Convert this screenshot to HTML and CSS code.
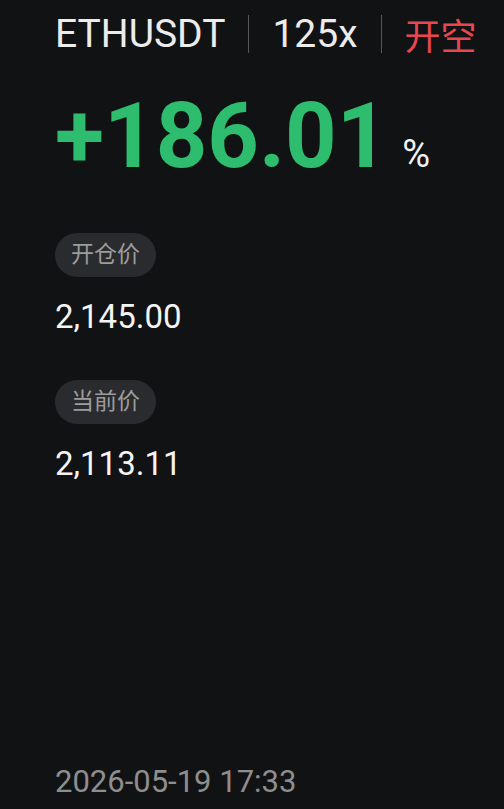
FILE: index.html
```html
<!DOCTYPE html>
<html>
<head>
    <title>ETHUSDT</title>
    <meta name="viewport" content="width=device-width, initial-scale=1">
    <link rel="stylesheet" href="styles.css">
</head>
<body>
    <div class="card">
        <div class="header">
            <span class="symbol">ETHUSDT</span>
            <span class="divider"></span>
            <span class="leverage">125x</span>
            <span class="divider"></span>
            <span class="side">开空</span>
        </div>

        <div class="pnl">
            <span class="pnl-value">+186.01</span>
            <span class="pnl-unit">%</span>
        </div>

        <div class="field">
            <span class="tag">开仓价</span>
            <div class="price">2,145.00</div>
        </div>

        <div class="field">
            <span class="tag">当前价</span>
            <div class="price">2,113.11</div>
        </div>

        <div class="time">2026-05-19 17:33</div>
    </div>
</body>
</html>
```

FILE: styles.css
```css
html, body {
    margin: 0;
    height: 100%;
}
body {
    background-color: #111214;
    color: #f2f2f2;
    font-family: Roboto, "Noto Sans CJK SC", sans-serif;
}
.card {
    height: 809px;
    box-sizing: border-box;
    padding: 12px 0 0 55px;
    display: flex;
    flex-direction: column;
}
.header {
    display: flex;
    align-items: center;
    height: 44px;
    font-size: 39px;
}
.symbol {
    color: #ececec;
}
.divider {
    width: 1px;
    height: 38px;
    background-color: #55565a;
    margin: 0 23px;
}
.leverage {
    color: #ececec;
}
.side {
    color: #e8474f;
    font-size: 36px;
}
.pnl {
    display: flex;
    align-items: baseline;
    margin-top: 28px;
}
.pnl-value {
    color: #2ebd6e;
    font-size: 90px;
    font-weight: bold;
}
.pnl-unit {
    font-size: 38px;
    margin-left: 14px;
    color: #f2f2f2;
}
.field {
    margin-top: 44px;
}
.tag {
    display: inline-block;
    height: 44px;
    line-height: 44px;
    padding: 0 16px;
    border-radius: 22px;
    background-color: #2a2b2e;
    color: #9c9c9c;
    font-size: 23px;
}
.price {
    margin-top: 21px;
    font-size: 33px;
    line-height: 38px;
    color: #f4f4f4;
}
.time {
    margin-top: auto;
    margin-bottom: 9px;
    font-size: 31px;
    color: #8e8e8e;
}
```
